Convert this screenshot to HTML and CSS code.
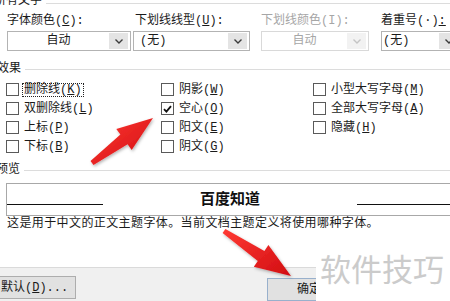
FILE: index.html
```html
<!DOCTYPE html>
<html lang="zh-CN">

<head>
  <meta charset="UTF-8">
  <meta name="viewport" content="width=device-width, initial-scale=1.0">
  <title>字体</title>
  <link rel="stylesheet" href="styles.css">
</head>

<body>
  <div class="dialog">
    <div class="group-title group-title--top">
      <span class="group-name">所有文字</span>
      <span class="group-line"></span>
    </div>

    <div class="fields">
      <div class="field field--color">
        <div class="field-label">字体颜色(<u>C</u>):</div>
        <div class="combo combo--center">
          <span class="combo-text">自动</span>
          <span class="combo-btn"><svg width="8" height="5" viewBox="0 0 8 5"><polyline points="0.5,0.5 4,4 7.5,0.5" /></svg></span>
        </div>
      </div>
      <div class="field field--line">
        <div class="field-label">下划线线型(<u>U</u>):</div>
        <div class="combo">
          <span class="combo-text">(无)</span>
          <span class="combo-btn"><svg width="8" height="5" viewBox="0 0 8 5"><polyline points="0.5,0.5 4,4 7.5,0.5" /></svg></span>
        </div>
      </div>
      <div class="field field--line-color disabled">
        <div class="field-label">下划线颜色(I):</div>
        <div class="combo combo--center">
          <span class="combo-text">自动</span>
          <span class="combo-btn"><svg width="8" height="5" viewBox="0 0 8 5"><polyline points="0.5,0.5 4,4 7.5,0.5" /></svg></span>
        </div>
      </div>
      <div class="field field--emph">
        <div class="field-label">着重号(·)<u>:</u></div>
        <div class="combo combo--tight">
          <span class="combo-text">(无)</span>
          <span class="combo-btn"><svg width="8" height="5" viewBox="0 0 8 5"><polyline points="0.5,0.5 4,4 7.5,0.5" /></svg></span>
        </div>
      </div>
    </div>

    <div class="group-title group-title--effects">
      <span class="group-name">效果</span>
      <span class="group-line"></span>
    </div>

    <div class="effects">
      <div class="check"><span class="box"></span><span class="check-text focus">删除线(<u>K</u>)</span></div>
      <div class="check"><span class="box"></span><span class="check-text">阴影(<u>W</u>)</span></div>
      <div class="check"><span class="box"></span><span class="check-text">小型大写字母(<u>M</u>)</span></div>

      <div class="check"><span class="box"></span><span class="check-text">双删除线(<u>L</u>)</span></div>
      <div class="check"><span class="box"><svg width="9" height="8" viewBox="0 0 9 8"><path d="M1 4.2 L3.4 6.6 L8 1.2" /></svg></span><span class="check-text">空心(<u>O</u>)</span></div>
      <div class="check"><span class="box"></span><span class="check-text">全部大写字母(<u>A</u>)</span></div>

      <div class="check"><span class="box"></span><span class="check-text">上标(<u>P</u>)</span></div>
      <div class="check"><span class="box"></span><span class="check-text">阳文(<u>E</u>)</span></div>
      <div class="check"><span class="box"></span><span class="check-text">隐藏(<u>H</u>)</span></div>

      <div class="check"><span class="box"></span><span class="check-text">下标(<u>B</u>)</span></div>
      <div class="check"><span class="box"></span><span class="check-text">阴文(<u>G</u>)</span></div>
    </div>

    <div class="group-title group-title--preview">
      <span class="group-name">预览</span>
      <span class="group-line"></span>
    </div>

    <div class="preview">
      <span class="pv-line"></span>
      <span class="pv-text">百度知道</span>
      <span class="pv-line"></span>
    </div>

    <p class="note">这是用于中文的正文主题字体。当前文档主题定义将使用哪种字体。</p>

    <div class="footer">
      <button class="btn btn--default">默认(<u>D</u>)...</button>
      <button class="btn btn--ok">确定</button>
    </div>
  </div>

  <svg class="arrows" width="450" height="301" viewBox="0 0 450 301">
    <defs>
      <linearGradient id="red" x1="0" y1="0" x2="1" y2="1">
        <stop offset="0" stop-color="#ff3a33" />
        <stop offset="1" stop-color="#d10d12" />
      </linearGradient>
      <filter id="shadow" x="-20%" y="-20%" width="140%" height="140%">
        <feDropShadow dx="1" dy="1.5" stdDeviation="1.4" flood-color="#000" flood-opacity="0.3" />
      </filter>
    </defs>
    <polygon fill="url(#red)" filter="url(#shadow)"
      points="90.5,161 120.4,134.6 116.3,128.9 153,118 131.7,149.9 127.6,144.2 93.5,165" />
    <polygon fill="url(#red)" filter="url(#shadow)"
      points="225.4,228.9 264.4,250.9 268.4,245.1 291,276 253.8,266.7 257.8,260.9 222.6,233.1" />
  </svg>

  <div class="watermark">软件技巧</div>
</body>

</html>
```

FILE: styles.css
```css
body {
  margin: 0;
  width: 450px;
  height: 301px;
  overflow: hidden;
  position: relative;
  background-color: #fff;
  color: #1a1a1a;
  font-family: "Liberation Mono", "Noto Sans CJK SC", monospace;
  font-size: 12px;
  line-height: 16px;
}

u {
  text-decoration: underline;
  text-underline-offset: 1px;
}

.dialog {
  display: flex;
  flex-direction: column;
  height: 100%;
}

/* group headings with a line running to the edge */
.group-title {
  display: flex;
  align-items: flex-start;
  height: 14px;
  line-height: 14px;
}

.group-name {
  white-space: nowrap;
}

.group-line {
  flex: 1;
  margin-top: 7px;
  margin-left: 4px;
  border-top: 1px solid #dcdcdc;
}

.group-title--top {
  margin-top: -6px;
  margin-left: -6px;
}

.group-title--top .group-line {
  margin-top: 9px;
}

.group-title--effects {
  margin-top: 11px;
  margin-left: -3px;
}

.group-title--preview {
  margin-top: 7px;
  margin-left: -4px;
}

/* combo boxes */
.fields {
  display: flex;
  padding-left: 7px;
  margin-top: 5px;
}

.field {
  flex-shrink: 0;
}

.field-label {
  height: 16px;
  margin-bottom: 2px;
  white-space: nowrap;
}

.field--color {
  width: 124px;
  margin-right: 2px;
}

.field--line {
  width: 117px;
  margin-right: 11px;
}

.field--line .field-label {
  padding-left: 2px;
}

.field--line-color {
  width: 108px;
  margin-right: 12px;
}

.field--emph {
  width: 80px;
}

.combo {
  display: flex;
  align-items: center;
  height: 20px;
  box-sizing: border-box;
  border: 1px solid #b3b3b3;
  background-color: #fff;
}

.combo-text {
  flex: 1;
  padding-left: 6px;
  white-space: nowrap;
}

.combo--center .combo-text {
  padding-left: 0;
  text-align: center;
}

.combo--tight .combo-text {
  padding-left: 1px;
}

.combo-btn {
  display: flex;
  align-items: center;
  justify-content: center;
  width: 19px;
  height: 16px;
  margin-right: 2px;
  background-color: #e4e4e4;
}

.combo-btn svg polyline {
  fill: none;
  stroke: #3c3c3c;
  stroke-width: 1.4;
}

.disabled .field-label,
.disabled .combo-text {
  color: #a6a6a6;
}

.disabled .combo {
  border-color: #d9d9d9;
}

.disabled .combo-btn {
  background-color: #f2f2f2;
}

.disabled .combo-btn svg polyline {
  stroke: #c4c4c4;
}

/* effect check boxes */
.effects {
  display: grid;
  grid-template-columns: 155px 152px 1fr;
  grid-auto-rows: 19px;
  align-items: center;
  padding-left: 6px;
  margin-top: 4px;
}

.check {
  display: flex;
  align-items: center;
  white-space: nowrap;
}

.box {
  display: flex;
  align-items: center;
  justify-content: center;
  width: 13px;
  height: 13px;
  box-sizing: border-box;
  border: 1px solid #5a5a5a;
  background-color: #fff;
  margin-right: 3px;
}

.box svg path {
  fill: none;
  stroke: #111;
  stroke-width: 1.8;
}

.check-text {
  line-height: 12px;
  padding: 0 1px;
  border: 1px solid transparent;
}

.check-text.focus {
  border: 1px dotted #222;
}

/* preview */
.preview {
  display: flex;
  align-items: center;
  height: 40px;
  box-sizing: border-box;
  margin-top: 6px;
  margin-left: 6px;
  margin-right: -4px;
  border: 1px solid #a8a8a8;
}

.pv-line {
  width: 96px;
  margin-top: 10px;
  border-top: 1px solid #111;
}

.pv-text {
  flex: 1;
  margin-top: -3px;
  text-align: center;
  font-family: "Noto Sans CJK SC", sans-serif;
  font-size: 15px;
  font-weight: bold;
  color: #111;
}

.note {
  margin: 0;
  padding-left: 7px;
  letter-spacing: 0.4px;
  white-space: nowrap;
}

/* button strip */
.footer {
  flex: 1;
  display: flex;
  align-items: flex-start;
  margin-top: 35px;
  border-top: 1px solid #dadada;
  background-color: #f0f0f0;
}

.btn {
  height: 23px;
  margin-top: 8px;
  border: 1px solid #adadad;
  background-color: #e1e1e1;
  color: #1a1a1a;
  font-family: "Liberation Mono", "Noto Sans CJK SC", monospace;
  font-size: 12px;
  line-height: 16px;
  padding: 0;
}

.btn--default {
  width: 86px;
  margin-left: -10px;
  padding-left: 10px;
  text-align: left;
}

.btn--ok {
  width: 84px;
  margin-left: 191px;
  margin-top: 10px;
  border-color: #98b0cc;
}

/* overlays */
.arrows {
  position: absolute;
  top: 0;
  left: 0;
  pointer-events: none;
}

.watermark {
  position: absolute;
  left: 316px;
  top: 248px;
  right: 0;
  bottom: 0;
  padding-top: 2px;
  padding-left: 4px;
  background-color: #fff;
  color: #cbcbcb;
  font-family: "Noto Sans CJK SC", sans-serif;
  font-size: 31px;
  line-height: 36px;
  white-space: nowrap;
}
```
